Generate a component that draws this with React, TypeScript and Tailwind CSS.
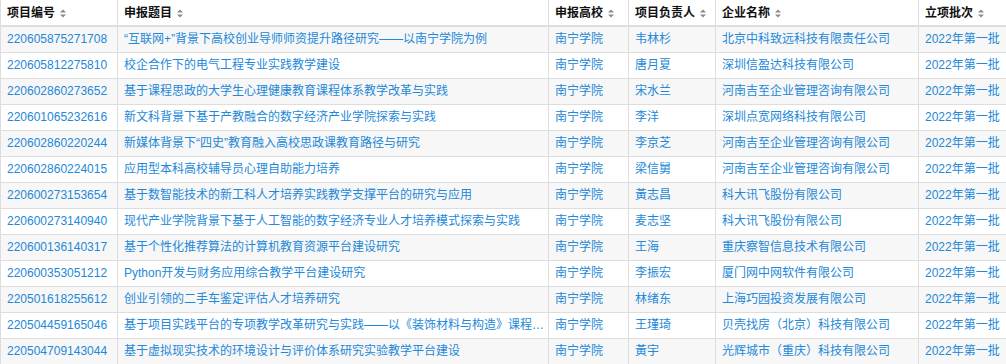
import React from 'react';

const ROWS: string[][] = [
  ['220605875271708', '“互联网+”背景下高校创业导师师资提升路径研究——以南宁学院为例', '南宁学院', '韦林杉', '北京中科致远科技有限责任公司', '2022年第一批'],
  ['220605812275810', '校企合作下的电气工程专业实践教学建设', '南宁学院', '唐月夏', '深圳信盈达科技有限公司', '2022年第一批'],
  ['220602860273652', '基于课程思政的大学生心理健康教育课程体系教学改革与实践', '南宁学院', '宋水兰', '河南吉至企业管理咨询有限公司', '2022年第一批'],
  ['220601065232616', '新文科背景下基于产教融合的数字经济产业学院探索与实践', '南宁学院', '李洋', '深圳点宽网络科技有限公司', '2022年第一批'],
  ['220602860220244', '新媒体背景下“四史”教育融入高校思政课教育路径与研究', '南宁学院', '李京芝', '河南吉至企业管理咨询有限公司', '2022年第一批'],
  ['220602860224015', '应用型本科高校辅导员心理自助能力培养', '南宁学院', '梁信舅', '河南吉至企业管理咨询有限公司', '2022年第一批'],
  ['220600273153654', '基于数智能技术的新工科人才培养实践教学支撑平台的研究与应用', '南宁学院', '黃志昌', '科大讯飞股份有限公司', '2022年第一批'],
  ['220600273140940', '现代产业学院背景下基于人工智能的数字经济专业人才培养模式探索与实践', '南宁学院', '麦志坚', '科大讯飞股份有限公司', '2022年第一批'],
  ['220600136140317', '基于个性化推荐算法的计算机教育资源平台建设研究', '南宁学院', '王海', '重庆察智信息技术有限公司', '2022年第一批'],
  ['220600353051212', 'Python开发与财务应用综合教学平台建设研究', '南宁学院', '李振宏', '厦门网中网软件有限公司', '2022年第一批'],
  ['220501618255612', '创业引领的二手车鉴定评估人才培养研究', '南宁学院', '林绪东', '上海巧园投资发展有限公司', '2022年第一批'],
  ['220504459165046', '基于项目实践平台的专项教学改革研究与实践——以《装饰材料与构造》课程…', '南宁学院', '王瑾琦', '贝壳找房（北京）科技有限公司', '2022年第一批'],
  ['220504709143044', '基于虚拟现实技术的环境设计与评价体系研究实验教学平台建设', '南宁学院', '黃宇', '光辉城市（重庆）科技有限公司', '2022年第一批'],
];

const HEADERS = ['项目编号', '申报题目', '申报高校', '项目负责人', '企业名称', '立项批次'];
const WIDTHS = ['w-[117px]', 'w-[431px]', 'w-[80px]', 'w-[87px]', 'w-[203px]', 'w-[102px]'];

const SortIcon = () => (
  <svg width="6" height="9" viewBox="0 0 6 9" className="inline-block ml-[5px] align-[-1px]">
    <path d="M0 3.5 L3 0.5 L6 3.5 Z" fill="#8a8a8a" />
    <path d="M0 5.5 L3 8.5 L6 5.5 Z" fill="#8a8a8a" />
  </svg>
);

export default function App() {
  return (
    <div className="w-[1006px] h-[364px] overflow-hidden bg-white font-['Liberation_Sans','Noto_Sans_CJK_SC',sans-serif] text-[12px]">
      <table className="w-[1020px] table-fixed border-collapse">
        <thead>
          <tr className="h-[26px]">
            {HEADERS.map((h, i) => (
              <th
                key={h}
                className={`${WIDTHS[i]} border-x border-b-2 border-[#dddddd] px-[6px] text-left font-bold text-[#111] whitespace-nowrap leading-none`}
              >
                {h}
                <SortIcon />
              </th>
            ))}
          </tr>
        </thead>
        <tbody>
          {ROWS.map((r, ri) => (
            <tr key={r[0]} className={`h-[26px] ${ri % 2 === 0 ? 'bg-[#f7f7f7]' : 'bg-white'}`}>
              {r.map((c, ci) => (
                <td
                  key={ci}
                  className="border border-[#dddddd] pl-[6px] pr-[4px] text-[#2388d8] whitespace-nowrap overflow-hidden leading-none"
                >
                  {c}
                </td>
              ))}
            </tr>
          ))}
        </tbody>
      </table>
    </div>
  );
}
